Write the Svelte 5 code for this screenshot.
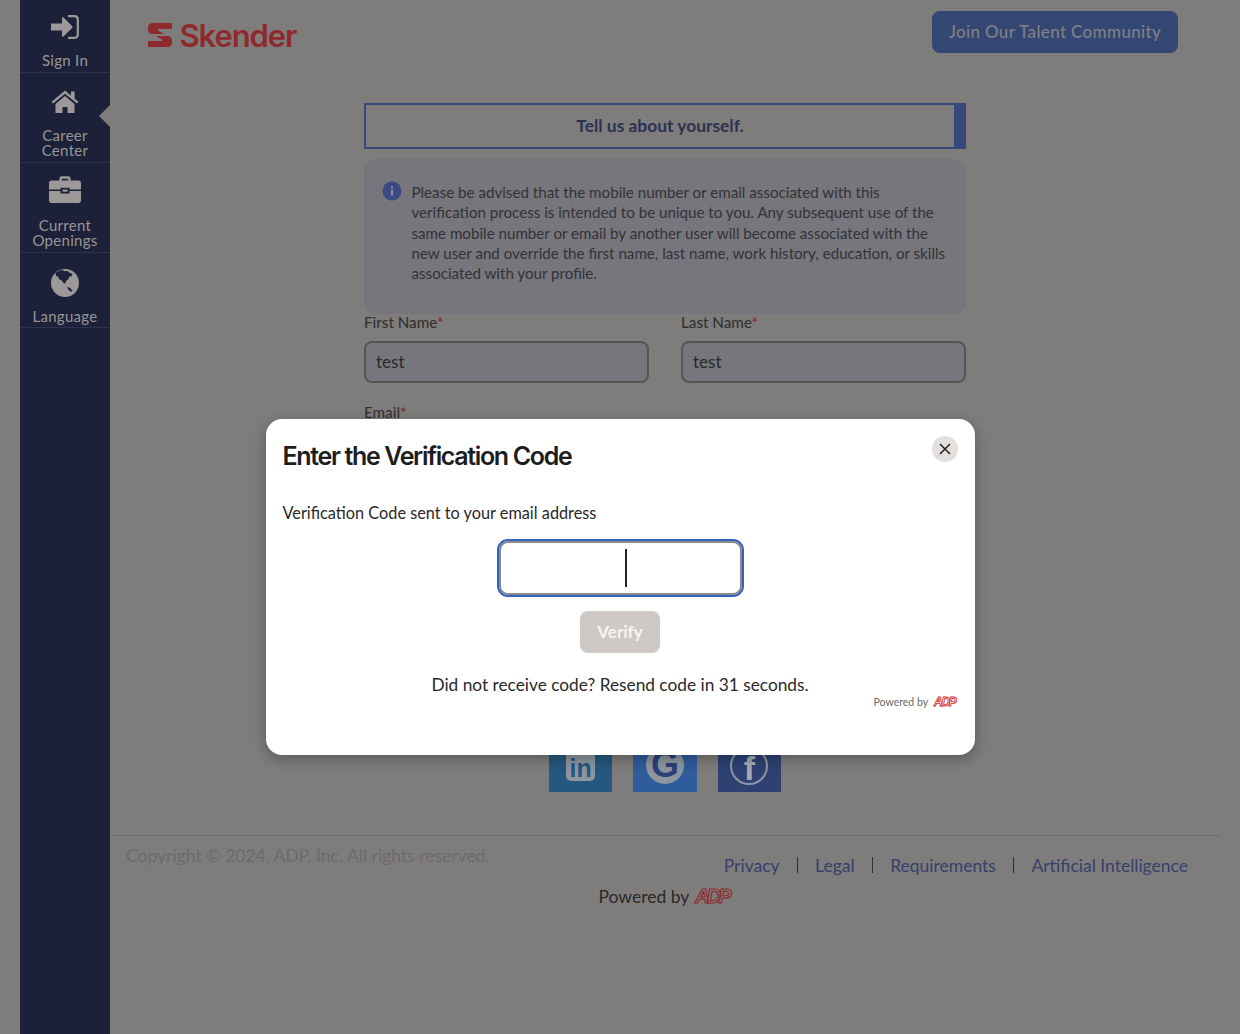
<script>
  const nav = [
    { label: ['Sign In'], icon: 'signin', h: 73 },
    { label: ['Career', 'Center'], icon: 'home', h: 90, active: true },
    { label: ['Current', 'Openings'], icon: 'case', h: 90 },
    { label: ['Language'], icon: 'globe', h: 75 }
  ]
  const links = ['Privacy', 'Legal', 'Requirements', 'Artificial Intelligence']
</script>

<div class="page">
  <aside class="sidebar">
    {#each nav as item}
      <a class="nav-item" class:active={item.active} href="#top" style="height: {item.h}px">
        <span class="nav-icon">
          {#if item.icon === 'signin'}
            <svg width="28" height="24" viewBox="0 0 28 24" fill="#9c9998">
              <path d="M0 8.5h11V3.2c0-.8.9-1.2 1.5-.6l8.6 8.500c.5.500.5 1.300 0 1.800l-8.600 8.500c-.6.600-1.500.200-1.500-.6V15.500H0z" />
              <path d="M17 1.200h6.500c2 0 3.300 1.300 3.300 3.300v15c0 2-1.300 3.300-3.300 3.300H17" fill="none" stroke="#9c9998" stroke-width="2.200" />
            </svg>
          {:else if item.icon === 'home'}
            <svg width="28" height="25" viewBox="0 0 28 25" fill="#9c9998">
              <path d="M0.600 12.800L14 1.500l6 5V2.500h3.600v7l3.900 3.300-1.500 1.800L14 4.700 2.100 14.600z" />
              <path d="M14 7l9.500 8v9H16.500v-6h-5v6H4.500v-9z" />
            </svg>
          {:else if item.icon === 'case'}
            <svg width="32" height="27" viewBox="0 0 32 27" fill="#9c9998">
              <path d="M10.500 5V2.500C10.500 1.200 11.500 0.300 12.800 0.300h6.400c1.300 0 2.300.9 2.300 2.200V5h-2.400V2.700h-6.200V5z" />
              <path d="M2.500 4.500h27C31 4.500 32 5.500 32 7v6.500H20.500v-1.800h-9v1.800H0V7c0-1.500 1-2.500 2.500-2.500z" />
              <path d="M0 15h11.500v2.500h9V15H32v9.500c0 1.500-1 2.500-2.500 2.500h-27C1 27 0 26 0 24.500z" />
              <rect x="13.500" y="13.500" width="5" height="2.200" />
            </svg>
          {:else}
            <svg width="28" height="28" viewBox="0 0 28 28">
              <circle cx="14" cy="14" r="14" fill="#9c9998" />
              <path d="M4.500 4c1.500-1.500 4.500-3 7-3l2 1.200 3-.3 2.500 2 2.500 1-1 2.300-2.500.6-.7 2.700-2.200 1.300-.6 2.700-2-.6-1.700-2.400-3-1.500-.8-2.800L5 7.200z" fill="#1c2039" />
              <path d="M16 18l3.300 1 2.200 3-2 .7-2.200-2.200z" fill="#1c2039" />
            </svg>
          {/if}
        </span>
        <span class="nav-label">
          {#each item.label as line}
            <span>{line}</span>
          {/each}
        </span>
      </a>
    {/each}
  </aside>

  <main class="main">
    <header class="topbar">
      <div class="logo">
        <svg width="24" height="24" viewBox="0 0 24 24" fill="#8e2a2e">
          <path d="M5 0h19v6H10.500c-1.200 0-1.400 1-.4 1.500l6 3.500H4.500C2 11 0 9.300 0 7V5c0-3 2-5 5-5z" />
          <path d="M19 24H0v-6h13.500c1.200 0 1.400-1 .4-1.500l-6-3.500h11.600c2.500 0 4.500 1.700 4.500 4v2c0 3-2 5-5 5z" />
        </svg>
        <span class="logo-text">Skender</span>
      </div>
      <button type="button" class="join">Join Our Talent Community</button>
    </header>

    <section class="form">
      <div class="step">Tell us about yourself.</div>

      <div class="notice">
        <svg class="info" width="20" height="20" viewBox="0 0 20 20">
          <circle cx="10" cy="10" r="9.500" fill="#3a4a85" />
          <rect x="9" y="8.500" width="2" height="6" fill="#8d8d96" />
          <rect x="9" y="5.300" width="2" height="2" fill="#8d8d96" />
        </svg>
        <p>Please be advised that the mobile number or email associated with this verification process is intended to be unique to you. Any subsequent use of the same mobile number or email by another user will become associated with the new user and override the first name, last name, work history, education, or skills associated with your profile.</p>
      </div>

      <div class="names">
        <div class="field">
          <span class="label">First Name<i>*</i></span>
          <div class="input">test</div>
        </div>
        <div class="field">
          <span class="label">Last Name<i>*</i></span>
          <div class="input">test</div>
        </div>
      </div>

      <div class="field email">
        <span class="label">Email<i>*</i></span>
      </div>

      <div class="social">
        <div class="tile linkedin"><span class="in">in</span></div>
        <div class="tile google"><span class="g">G</span></div>
        <div class="tile facebook"><span class="ring"><span class="fb">f</span></span></div>
      </div>
    </section>

    <footer class="footer">
      <div class="footer-row">
        <span class="copy">Copyright © 2024, ADP, Inc. All rights reserved.</span>
        <nav class="links">
          {#each links as link, i}
            {#if i > 0}<span class="sep"></span>{/if}
            <a href="#top">{link}</a>
          {/each}
        </nav>
      </div>
      <div class="powered">Powered by <span class="adp adp-big">ADP</span></div>
    </footer>
  </main>

  <div class="modal" role="dialog" aria-modal="true">
    <button type="button" class="close" aria-label="Close">
      <svg width="12" height="12" viewBox="0 0 12 12" stroke="#222" stroke-width="1.500" fill="none">
        <path d="M1 1l10 10M11 1L1 11" />
      </svg>
    </button>
    <h2>Enter the Verification Code</h2>
    <p class="sent">Verification Code sent to your email address</p>
    <div class="code"><span class="caret"></span></div>
    <button type="button" class="verify" disabled>Verify</button>
    <p class="resend">Did not receive code? Resend code in 31 seconds.</p>
    <div class="modal-powered">Powered by <span class="adp adp-small">ADP</span></div>
  </div>
</div>

<style>
  :global(body) {
    margin: 0;
    background: #7f7d7c;
    font-family: Lato, "Open Sans", sans-serif;
    color: #2e2d2d;
  }
  a {
    text-decoration: none;
  }
  .page {
    position: relative;
    display: flex;
    min-height: 1034px;
    padding-left: 20px;
    overflow: hidden;
  }

  /* sidebar */
  .sidebar {
    flex: 0 0 90px;
    background: #1c2039;
  }
  .nav-item {
    position: relative;
    box-sizing: border-box;
    display: flex;
    flex-direction: column;
    align-items: center;
    border-bottom: 1px solid #2d3252;
    color: #989696;
    font-size: 15px;
    line-height: 15px;
    text-align: center;
  }
  .nav-item:first-child {
    padding-top: 15px;
  }
  .nav-item:not(:first-child) {
    padding-top: 16px;
  }
  .nav-icon {
    display: flex;
    justify-content: center;
    align-items: flex-start;
    height: 38px;
  }
  .nav-item:nth-child(2) .nav-icon {
    height: 39px;
  }
  .nav-item:nth-child(3) .nav-icon {
    height: 42px;
    margin-top: -4px;
    padding-top: 1px;
  }
  .nav-item:nth-child(4) .nav-icon {
    height: 40px;
  }
  .nav-label {
    display: flex;
    flex-direction: column;
    letter-spacing: 0.300px;
  }
  .nav-item.active::after {
    content: "";
    position: absolute;
    right: 0;
    top: 32px;
    border-style: solid;
    border-color: transparent #7f7d7c transparent transparent;
    border-width: 11px 11px 11px 0;
  }

  /* main */
  .main {
    flex: 1;
    min-width: 0;
  }
  .topbar {
    display: flex;
    justify-content: space-between;
    align-items: flex-start;
    height: 103px;
    box-sizing: border-box;
    padding: 11px 62px 0 38px;
  }
  .logo {
    display: flex;
    align-items: center;
    gap: 7.500px;
    margin-top: 12px;
    height: 24px;
  }
  .logo-text {
    font-family: Inter, sans-serif;
    font-size: 31px;
    font-weight: 600;
    letter-spacing: -1.100px;
    color: #8e2a2e;
  }
  .join {
    box-sizing: border-box;
    width: 246px;
    height: 42px;
    padding: 0 0 1px;
    border: 0;
    border-radius: 8px;
    background: #344672;
    color: #7f8088;
    font-family: inherit;
    font-size: 17px;
    font-weight: 500;
    letter-spacing: 0.350px;
  }

  /* form */
  .form {
    width: 602px;
    margin-left: 254px;
  }
  .step {
    box-sizing: border-box;
    height: 46px;
    padding-bottom: 2px;
    border: 2px solid #39487a;
    border-right: 12px solid #39487a;
    display: flex;
    align-items: center;
    justify-content: center;
    color: #2c3252;
    font-size: 17.400px;
    font-weight: 700;
  }
  .notice {
    box-sizing: border-box;
    height: 155px;
    margin-top: 10px;
    padding: 23px 18px 0;
    display: flex;
    gap: 9.500px;
    border-radius: 12px;
    background: #76767c;
  }
  .info {
    flex: none;
    margin-top: -1px;
  }
  .notice p {
    margin: 0;
    color: #333236;
    font-size: 15.150px;
    line-height: 20.300px;
  }
  .names {
    display: flex;
    gap: 32px;
    margin-top: 1px;
  }
  .field {
    flex: 1;
    min-width: 0;
  }
  .label {
    display: block;
    height: 26px;
    color: #333232;
    font-size: 15.200px;
    line-height: 14px;
    font-weight: 500;
  }
  .label i {
    color: #7d2a2c;
    font-style: normal;
  }
  .input {
    box-sizing: border-box;
    height: 42px;
    padding: 0 10px 2px;
    display: flex;
    align-items: center;
    border: 2px solid #565555;
    border-radius: 8px;
    background: #76767c;
    color: #2a2a2a;
    font-size: 17px;
  }
  .email {
    margin-top: 22px;
  }
  .social {
    display: flex;
    justify-content: center;
    gap: 21px;
    margin-top: 298px;
  }
  .tile {
    width: 63.330px;
    height: 63px;
    display: flex;
    align-items: flex-end;
    justify-content: center;
  }
  .linkedin {
    background: #25587f;
  }
  .google {
    background: #2f5c9c;
  }
  .facebook {
    background: #2d4272;
  }
  .in {
    width: 29px;
    height: 40px;
    margin-bottom: 11px;
    border-radius: 5px;
    background: #8d96a0;
    color: #25587f;
    font-family: "Liberation Sans", sans-serif;
    font-weight: 700;
    font-size: 25px;
    line-height: 1;
    text-align: center;
    display: flex;
    align-items: flex-end;
    justify-content: center;
  }
  .g {
    width: 38px;
    height: 38px;
    margin-bottom: 8px;
    border-radius: 50%;
    background: #8d96a0;
    color: #2c3f78;
    font-family: "Liberation Sans", sans-serif;
    font-weight: 700;
    font-size: 36px;
    line-height: 38px;
    text-align: center;
  }
  .ring {
    width: 38px;
    height: 38px;
    margin-bottom: 7px;
    box-sizing: border-box;
    border: 2.500px solid #8d96a0;
    border-radius: 50%;
    display: flex;
    align-items: flex-end;
    justify-content: center;
  }
  .fb {
    color: #a7aab0;
    font-family: "Liberation Sans", sans-serif;
    font-weight: 700;
    font-size: 34px;
    line-height: 30px;
  }

  /* footer */
  .footer {
    width: 1110px;
    margin-top: 43px;
    border-top: 1px solid #6f6d6d;
  }
  .footer-row {
    display: flex;
    justify-content: space-between;
    box-sizing: border-box;
    padding: 10px 32px 0 16px;
    height: 40px;
  }
  .copy {
    color: #6c6a6a;
    font-size: 17.500px;
    line-height: 20px;
  }
  .links {
    display: flex;
    align-items: center;
    gap: 17px;
    height: 20px;
    margin-top: 9px;
  }
  .links a {
    color: #35406c;
    font-size: 17.500px;
  }
  .sep {
    width: 1.500px;
    height: 16px;
    background: #2f2f33;
  }
  .powered {
    margin-top: 9px;
    display: flex;
    align-items: center;
    justify-content: center;
    gap: 6px;
    color: #2a2929;
    font-size: 17.500px;
  }
  .adp {
    font-family: "Liberation Sans", sans-serif;
    font-style: italic;
    font-weight: 700;
    color: transparent;
    -webkit-text-stroke: 1.200px #8e2a2e;
  }
  .adp-big {
    font-size: 20px;
    letter-spacing: -3px;
    padding-right: 3px;
  }
  .adp-small {
    font-size: 12px;
    letter-spacing: -1.300px;
    -webkit-text-stroke: 0.800px #d8232a;
    padding-right: 2px;
  }

  /* modal */
  .modal {
    position: absolute;
    left: 265.500px;
    top: 419px;
    box-sizing: border-box;
    width: 709px;
    height: 336px;
    padding: 20px 17px 0;
    border-radius: 16px;
    background: #fff;
    box-shadow: 0 4px 14px rgba(0, 0, 0, 0.3);
    text-align: center;
  }
  .close {
    position: absolute;
    top: 17px;
    right: 16.500px;
    width: 26px;
    height: 26px;
    padding: 0;
    border: 0;
    border-radius: 50%;
    background: #e3dfdd;
    display: flex;
    align-items: center;
    justify-content: center;
  }
  h2 {
    margin: 0;
    color: #1e1d1d;
    font-family: Inter, sans-serif;
    font-size: 25px;
    line-height: 34px;
    font-weight: 600;
    letter-spacing: -1.350px;
    text-align: left;
  }
  .sent {
    margin: 30px 0 0;
    color: #2a2929;
    font-size: 16.300px;
    line-height: 20px;
    text-align: left;
  }
  .code {
    box-sizing: border-box;
    width: 243px;
    height: 54px;
    margin: 18px auto 0;
    display: flex;
    align-items: center;
    justify-content: center;
    border: 2px solid #8c8b8b;
    border-radius: 9px;
    background: #fff;
    outline: 2px solid #3562c0;
    outline-offset: 0;
    padding-left: 12px;
  }
  .caret {
    width: 1.500px;
    height: 38px;
    background: #222;
  }
  .verify {
    display: block;
    width: 80px;
    height: 42px;
    margin: 16px auto 0;
    padding: 0 0 2px;
    border: 0;
    border-radius: 8px;
    background: #cfc9c6;
    color: #f7f5f4;
    font-family: inherit;
    font-size: 17px;
    font-weight: 700;
  }
  .resend {
    margin: 22px 0 0;
    color: #2a2929;
    font-size: 17.300px;
    line-height: 20px;
  }
  .modal-powered {
    position: absolute;
    right: 17px;
    top: 276px;
    display: flex;
    align-items: center;
    gap: 6px;
    color: #6b6968;
    font-size: 10.500px;
  }
</style>
